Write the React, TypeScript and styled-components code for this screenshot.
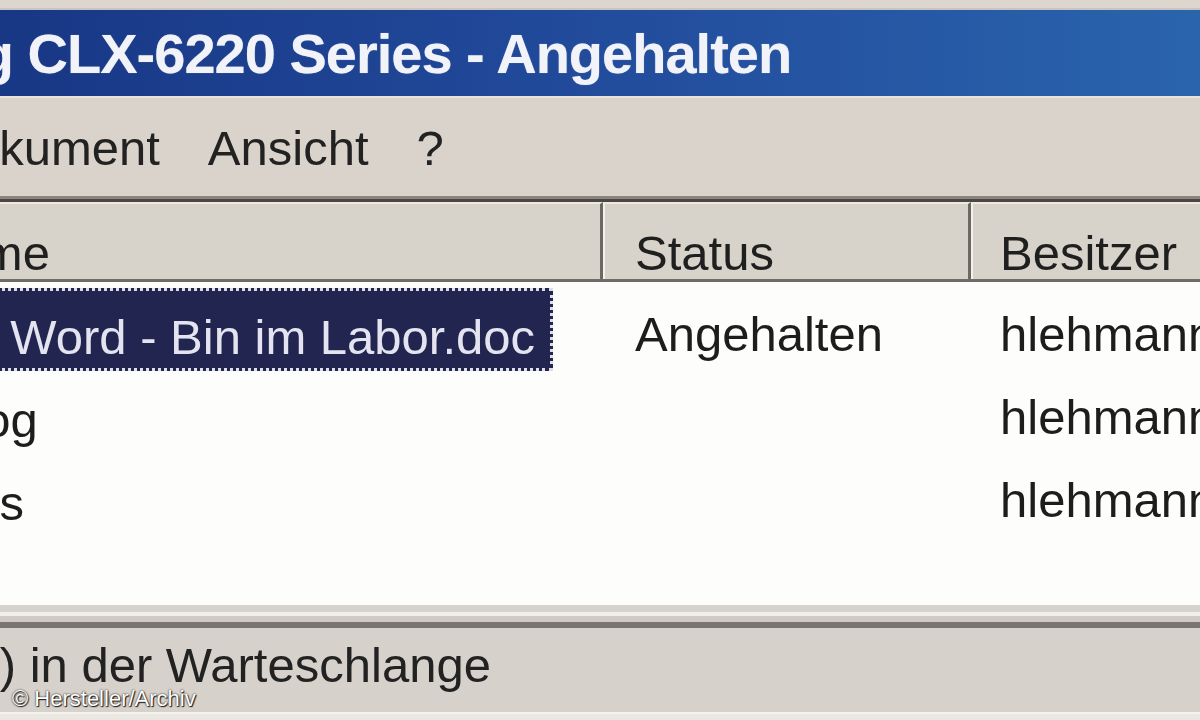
import React from 'react'
import styled, { createGlobalStyle } from 'styled-components'

const GlobalStyle = createGlobalStyle`
  html, body {
    margin: 0;
    padding: 0;
    background: #d8d2ca;
    overflow: hidden;
  }
  * {
    box-sizing: border-box;
  }
`

const FONT = `"Liberation Sans", Arial, sans-serif`

const Window = styled.div`
  position: relative;
  width: 1200px;
  height: 720px;
  overflow: hidden;
  display: flex;
  flex-direction: column;
  background: #d8d2ca;
  font-family: ${FONT};
  color: #1c1c1c;
`

const TopStrip = styled.div`
  height: 10px;
  flex: none;
  background: #ddd6ce;
  border-bottom: 2px solid #c9c4bf;
`

const TitleBar = styled.div`
  height: 88px;
  flex: none;
  padding-top: 16px;
  background: linear-gradient(90deg, #183785 0%, #21499a 45%, #2a64ad 100%);
  border-bottom: 2px solid #e6e2dc;
  white-space: nowrap;
`

const TitleText = styled.div`
  margin-left: -232px;
  font-size: 56px;
  line-height: 56px;
  font-weight: bold;
  letter-spacing: -1px;
  color: #f2f3f8;
  text-shadow: 0 0 1px rgba(255, 255, 255, 0.5);
`

const MenuBar = styled.div`
  height: 98px;
  flex: none;
  display: flex;
  padding-top: 26px;
  margin-left: -307px;
  background: #d9d3cb;
  white-space: nowrap;
`

const MenuItem = styled.div`
  padding: 0 24px;
  font-size: 49px;
  line-height: 49px;
  color: #222;
`

const ListFrame = styled.div`
  flex: 1;
  display: flex;
  flex-direction: column;
  border-top: 3px solid #8a847f;
  box-shadow: inset 0 3px 0 #4b4643;
  background: #fff;
`

const HeaderRow = styled.div`
  height: 80px;
  flex: none;
  display: grid;
  grid-template-columns: 926px 368px 1fr;
  margin-left: -323px;
  margin-top: 3px;
  background: #d7d2ca;
  border-bottom: 3px solid #6f6b67;
`

const HeaderCell = styled.div<{ pad: number; last?: boolean }>`
  padding-left: ${({ pad }) => pad}px;
  padding-top: 25px;
  font-size: 49px;
  line-height: 49px;
  color: #1f1f1f;
  white-space: nowrap;
  border-left: 2px solid #f4f1ec;
  border-top: 2px solid #ece8e2;
  border-right: ${({ last }) => (last ? 'none' : '3px solid #6c6864')};
  overflow: hidden;
`

const ListBody = styled.div`
  flex: 1;
  padding-top: 6px;
  background: #fdfdfc;
`

const Row = styled.div`
  height: 83px;
  display: grid;
  grid-template-columns: 926px 368px 1fr;
  margin-left: -323px;
  white-space: nowrap;
`

const NameCell = styled.div`
  display: flex;
  padding-left: 111px;
`

const Label = styled.div<{ selected?: boolean }>`
  height: 83px;
  padding: 22px 15px 0 10px;
  font-size: 49px;
  line-height: 49px;
  color: ${({ selected }) => (selected ? '#e4e4f0' : '#1d1d1d')};
  background: ${({ selected }) => (selected ? '#232551' : 'transparent')};
  border: 3px dotted ${({ selected }) => (selected ? 'rgba(255,255,255,0.85)' : 'transparent')};
  margin-left: -3px;
`

const Cell = styled.div<{ pad: number }>`
  padding: 22px 0 0 ${({ pad }) => pad}px;
  font-size: 49px;
  line-height: 49px;
  color: #1d1d1d;
`

const FrameBottom = styled.div`
  height: 23px;
  flex: none;
  background: #cfcac4;
  border-top: 7px solid #d6d2cc;
  box-shadow: inset 0 4px 0 #f1eee9;
  border-bottom: 6px solid #7b7571;
`

const StatusBar = styled.div`
  height: 84px;
  flex: none;
  padding-top: 13px;
  margin-left: -308px;
  background: #d7d1cb;
  font-size: 49px;
  line-height: 49px;
  color: #222;
  white-space: nowrap;
`

const BottomStrip = styled.div`
  height: 8px;
  flex: none;
  background: #ebe7e3;
  border-top: 2px solid #f5f3f0;
`

const Watermark = styled.div`
  position: absolute;
  left: 12px;
  bottom: 10px;
  font-family: ${FONT};
  font-size: 22px;
  line-height: 22px;
  color: #fff;
  text-shadow: 0 0 2px #000, 1px 1px 1px #222;
`

const columns = [
  { title: 'Dokumentname', pad: 25 },
  { title: 'Status', pad: 30 },
  { title: 'Besitzer', pad: 27 }
]

const jobs = [
  { name: 'Microsoft Word - Bin im Labor.doc', status: 'Angehalten', owner: 'hlehmann', selected: true },
  { name: 'Bildkatalog', status: '', owner: 'hlehmann' },
  { name: 'Kosten.xls', status: '', owner: 'hlehmann' }
]

export default function App() {
  return (
    <>
      <GlobalStyle />
      <Window>
        <TopStrip />
        <TitleBar>
          <TitleText>Samsung CLX-6220 Series - Angehalten</TitleText>
        </TitleBar>
        <MenuBar>
          {['Drucker', 'Dokument', 'Ansicht', '?'].map(item => (
            <MenuItem key={item}>{item}</MenuItem>
          ))}
        </MenuBar>
        <ListFrame>
          <HeaderRow>
            {columns.map((col, idx) => (
              <HeaderCell key={col.title} pad={col.pad} last={idx === columns.length - 1}>
                {col.title}
              </HeaderCell>
            ))}
          </HeaderRow>
          <ListBody>
            {jobs.map(job => (
              <Row key={job.name}>
                <NameCell>
                  <Label selected={job.selected}>{job.name}</Label>
                </NameCell>
                <Cell pad={32}>{job.status}</Cell>
                <Cell pad={29}>{job.owner}</Cell>
              </Row>
            ))}
          </ListBody>
        </ListFrame>
        <FrameBottom />
        <StatusBar>0 Dokument(e) in der Warteschlange</StatusBar>
        <BottomStrip />
        <Watermark>© Hersteller/Archiv</Watermark>
      </Window>
    </>
  )
}
